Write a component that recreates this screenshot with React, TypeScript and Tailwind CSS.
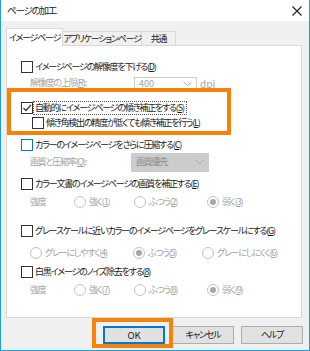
import React from "react";

const F = "[font-family:'Noto_Sans_CJK_JP','Noto_Sans',sans-serif] [font-feature-settings:'palt'] tracking-[-1.2px] whitespace-nowrap";

function CheckBox({ checked = false, blue = false }: { checked?: boolean; blue?: boolean }) {
  const border = blue ? "border-[#0078d7]" : "border-[#333333]";
  return (
    <span className={`relative inline-flex h-[12px] w-[12px] shrink-0 items-center justify-center border bg-white ${border}`}>
      {checked && (
        <svg width="10" height="10" viewBox="0 0 10 10" className="block">
          <polyline points="1.5,5 4,7.5 8.8,2" fill="none" stroke="#333" strokeWidth="1.2" />
        </svg>
      )}
    </span>
  );
}

function Radio({ checked = false }: { checked?: boolean }) {
  return (
    <span className="inline-flex h-[12px] w-[12px] shrink-0 items-center justify-center rounded-full border border-[#c2c2c2] bg-white">
      {checked && <span className="h-[6px] w-[6px] rounded-full bg-[#a8a8a8]" />}
    </span>
  );
}

function Chevron() {
  return (
    <svg width="9" height="6" viewBox="0 0 9 6" className="block">
      <polyline points="0.5,0.8 4.5,4.8 8.5,0.8" fill="none" stroke="#a6a6a6" strokeWidth="1" />
    </svg>
  );
}

function CheckRow({ label, checked, blue, indent = false, focus = false, mt }: { label: React.ReactNode; checked?: boolean; blue?: boolean; indent?: boolean; focus?: boolean; mt: string }) {
  return (
    <div className={`flex h-[14px] items-center ${mt} ${indent ? "pl-[11px]" : ""}`}>
      <CheckBox checked={checked} blue={blue} />
      <span className={`ml-px pl-[1px] pr-[2px] leading-[12px] text-[9px] text-[#1a1a1a] ${focus ? "outline outline-1 outline-dotted outline-[#555]" : ""}`}>{label}</span>
    </div>
  );
}

function RadioItem({ label, checked, w }: { label: React.ReactNode; checked?: boolean; w: string }) {
  return (
    <div className={`flex items-center ${w}`}>
      <Radio checked={checked} />
      <span className="ml-[3px] text-[9px] text-[#a3a3a3]">{label}</span>
    </div>
  );
}

const U = ({ c }: { c: string }) => <span className="underline underline-offset-1">{c}</span>;

export default function App() {
  return (
    <div className={`relative h-[351px] w-[310px] overflow-hidden border-x border-b border-[#1ba1e2] bg-[#f0f0f0] ${F}`}>
      {/* title bar */}
      <div className="flex h-[21px] items-center justify-between bg-white pl-[6px] pr-[6px]">
        <span className="text-[9.5px] text-[#1a1a1a]">ページの加工</span>
        <svg width="10" height="10" viewBox="0 0 10 10" className="mr-[1px]">
          <path d="M0.5 0.5 L9.5 9.5 M9.5 0.5 L0.5 9.5" stroke="#222" strokeWidth="1.1" />
        </svg>
      </div>

      {/* tabs */}
      <div className="ml-[5px] mt-[7px] flex h-[17px] items-end">
        <div className="relative z-10 mb-[-1px] flex h-[18px] w-[57px] items-center justify-center border-x border-t border-[#d9d9d9] bg-white text-[9px] text-[#1a1a1a]">
          イメージページ
        </div>
        <div className="flex h-[14px] w-[79px] items-center justify-center border-r border-t border-[#d9d9d9] bg-[#f0f0f0] text-[9px] text-[#1a1a1a]">
          アプリケーションページ
        </div>
        <div className="flex h-[14px] w-[34px] items-center justify-center border-r border-t border-[#d9d9d9] bg-[#f0f0f0] text-[9px] text-[#1a1a1a]">
          共通
        </div>
      </div>

      {/* panel */}
      <div className="ml-[5px] flex h-[273px] w-[296px] flex-col border border-[#d9d9d9] bg-white pl-[14px] pt-[14px]">
        <CheckRow mt="mt-0" label={<>イメージページの解像度を下げる(<U c="D" />)</>} />
        <div className="mt-[2px] flex h-[14px] items-center pl-[9px]">
          <span className="w-[104px] text-[9px] text-[#a3a3a3]">解像度の上限(<U c="R" />):</span>
          <div className="relative top-[1px] flex h-[15px] w-[63px] items-center justify-between border border-[#cccccc] bg-white pl-[4px] pr-[4px] text-[9px] text-[#a3a3a3]">
            <span className="tracking-normal">400</span>
            <Chevron />
          </div>
          <span className="ml-[3px] text-[10px] tracking-normal text-[#a3a3a3]">dpi</span>
        </div>
        <CheckRow mt="mt-[11px]" checked focus label={<>自動的にイメージページの傾き補正をする(<U c="S" />)</>} />
        <CheckRow mt="mt-px" indent label={<>傾き角検出の精度が低くても傾き補正を行う(<U c="L" />)</>} />
        <CheckRow mt="mt-[8px]" blue label={<>カラーのイメージページをさらに圧縮する(<U c="C" />)</>} />
        <div className="mt-[3px] flex h-[14px] items-center pl-[9px]">
          <span className="w-[101px] text-[9px] text-[#a3a3a3]">画質と圧縮率(<U c="Q" />):</span>
          <div className="flex h-[19px] w-[78px] items-center justify-between bg-[#cccccc] pl-[5px] pr-[5px] text-[9px] text-[#8c8c8c]">
            <span>画質優先</span>
            <Chevron />
          </div>
        </div>
        <CheckRow mt="mt-[8px]" label={<>カラー文書のイメージページの画質を補正する(<U c="E" />)</>} />
        <div className="mt-[4px] flex h-[14px] items-center pl-[9px]">
          <span className="w-[44px] text-[9px] text-[#a3a3a3]">強度</span>
          <RadioItem w="w-[60px]" label={<>強く(<U c="1" />)</>} />
          <RadioItem w="w-[73px]" label={<>ふつう(<U c="2" />)</>} />
          <RadioItem w="w-[60px]" checked label={<>弱く(<U c="3" />)</>} />
        </div>
        <CheckRow mt="mt-[15px]" label={<>グレースケールに近いカラーのイメージページをグレースケールにする(<U c="G" />)</>} />
        <div className="mt-[8px] flex h-[14px] items-center pl-[9px]">
          <RadioItem w="w-[103px]" label={<>グレーにしやすく(<U c="4" />)</>} />
          <RadioItem w="w-[69px]" checked label={<>ふつう(<U c="5" />)</>} />
          <RadioItem w="w-[90px]" label={<>グレーにしにくく(<U c="6" />)</>} />
        </div>
        <CheckRow mt="mt-[5px]" label={<>白黒イメージのノイズ除去をする(<U c="8" />)</>} />
        <div className="mt-[4px] flex h-[14px] items-center pl-[9px]">
          <span className="w-[44px] text-[9px] text-[#a3a3a3]">強度</span>
          <RadioItem w="w-[60px]" label={<>強く(<U c="7" />)</>} />
          <RadioItem w="w-[73px]" label={<>ふつう(<U c="8" />)</>} />
          <RadioItem w="w-[60px]" checked label={<>弱く(<U c="9" />)</>} />
        </div>
      </div>

      {/* buttons */}
      <div className="mr-[6px] mt-[8px] flex justify-end gap-[7px]">
        <button className="flex h-[18px] w-[62px] items-center justify-center border border-[#0078d7] bg-[#e1e1e1] text-[9.5px] tracking-normal text-[#1a1a1a] shadow-[inset_0_0_0_1px_#0078d7]">OK</button>
        <button className="flex h-[18px] w-[62px] items-center justify-center border border-[#adadad] bg-[#e1e1e1] text-[9px] text-[#1a1a1a]">キャンセル</button>
        <button className="flex h-[18px] w-[62px] items-center justify-center border border-[#adadad] bg-[#e1e1e1] text-[9px] text-[#1a1a1a]">ヘルプ</button>
      </div>

      {/* orange highlights */}
      <div className="pointer-events-none absolute left-[6px] top-[88px] h-[47px] w-[224px] border-4 border-[#f5820a]" />
      <div className="pointer-events-none absolute left-[91px] top-[318px] h-[30px] w-[81px] border-4 border-[#f5820a]" />
    </div>
  );
}
